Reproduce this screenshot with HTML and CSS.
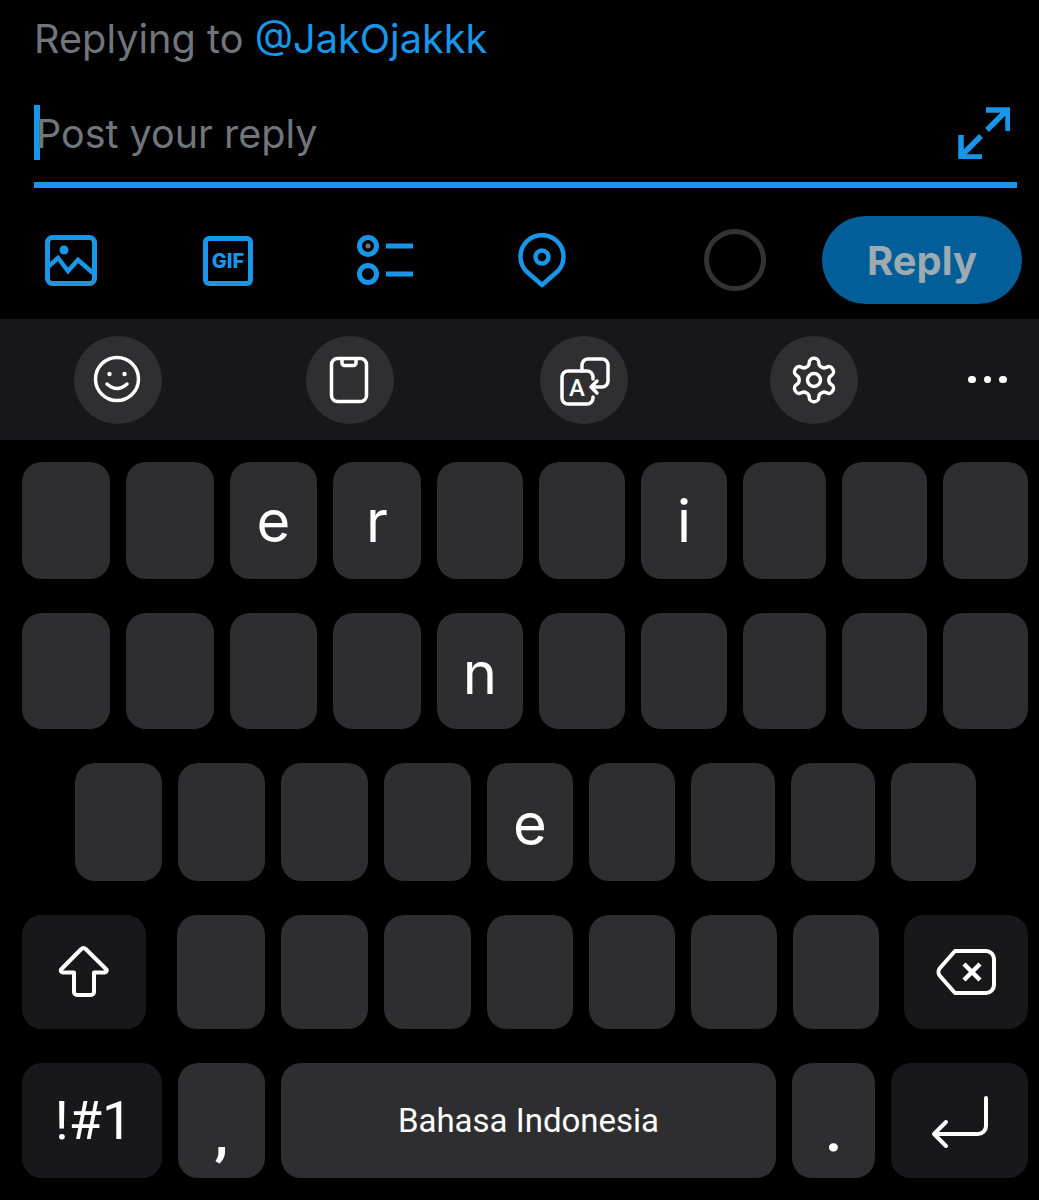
FILE: index.html
```html
<!DOCTYPE html>
<html>
<head>
    <title>Reply</title>
    <link rel="stylesheet" href="styles.css">
</head>
<body>
    <div class="compose">
        <div class="reply-to">Replying to <span class="handle">@JakOjakkk</span></div>
        <div class="input-row">
            <span class="caret"></span>
            <span class="placeholder">Post your reply</span>
            <svg class="expand" width="52" height="52" viewBox="0 0 52 52" fill="none" stroke="#1897ea" stroke-width="5.5">
                <path d="M28 3H50V24M49 3L29 23"/>
                <path d="M3 28V50H24M3 49L23 29"/>
            </svg>
        </div>
        <div class="input-line"></div>
        <div class="actions">
            <svg width="52" height="52" viewBox="0 0 52 52" fill="none" stroke="#1897ea" stroke-width="5">
                <rect x="2.5" y="2.5" width="47" height="46" rx="5"/>
                <circle cx="19" cy="15" r="4.5" fill="#1897ea" stroke="none"/>
                <path d="M4 31L13 23L23 36L33 25L48 38" stroke-width="4.5"/>
            </svg>
            <div class="gif-icon">GIF</div>
            <svg width="57" height="52" viewBox="0 0 57 52" fill="none" stroke="#1897ea" stroke-width="5">
                <circle cx="11" cy="11" r="8.5"/>
                <circle cx="11" cy="11" r="2.5" fill="#71767b" stroke="none"/>
                <circle cx="11" cy="39" r="8.5"/>
                <path d="M29 11H56M29 39H56"/>
            </svg>
            <svg width="48" height="56" viewBox="0 0 48 56" fill="none" stroke="#1897ea" stroke-width="4.5" stroke-linejoin="round">
                <path d="M24 52L8 38A21.5 21.5 0 1 1 40 38Z"/>
                <circle cx="24" cy="24" r="6.5"/>
            </svg>
            <div class="counter"></div>
            <div class="reply-btn">Reply</div>
        </div>
    </div>

    <div class="toolbar">
        <div class="tool">
            <svg width="50" height="50" viewBox="0 0 50 50" fill="none" stroke="#fff" stroke-width="3.5" stroke-linecap="round">
                <circle cx="24" cy="24" r="21.5"/>
                <circle cx="16.5" cy="19" r="2.2" fill="#fff" stroke="none"/>
                <circle cx="31.5" cy="19" r="2.2" fill="#fff" stroke="none"/>
                <path d="M14 29Q24 38 34 29"/>
            </svg>
        </div>
        <div class="tool">
            <svg width="50" height="50" viewBox="0 0 50 50" fill="none" stroke="#fff" stroke-width="3.5">
                <rect x="6.5" y="3.5" width="35" height="43" rx="6"/>
                <path d="M17 4V8a2.5 2.5 0 0 0 2.5 2.5H28.5A2.5 2.5 0 0 0 31 8V4"/>
            </svg>
        </div>
        <div class="tool">
            <svg width="56" height="60" viewBox="0 0 56 60" fill="none" stroke="#fff" stroke-width="3.5" stroke-linecap="round" stroke-linejoin="round">
                <path d="M37 29V27a6 6 0 0 0 -6 -6H12a6 6 0 0 0 -6 6V48a6 6 0 0 0 6 6H31a6 6 0 0 0 6 -6V47"/>
                <path d="M26 21V15a6 6 0 0 1 6 -6H46a6 6 0 0 1 6 6V31a6 6 0 0 1 -6 6H35M41 31L35 37L41 43"/>
                <text x="21" y="46" class="tool-letter" text-anchor="middle">A</text>
            </svg>
        </div>
        <div class="tool">
            <svg width="52" height="52" viewBox="0 0 24 24" fill="none" stroke="#fff" stroke-width="1.6" stroke-linecap="round" stroke-linejoin="round">
                <path d="M12.22 2h-.44a2 2 0 0 0-2 2v.18a2 2 0 0 1-1 1.73l-.43.25a2 2 0 0 1-2 0l-.15-.08a2 2 0 0 0-2.73.73l-.22.38a2 2 0 0 0 .73 2.73l.15.1a2 2 0 0 1 1 1.72v.51a2 2 0 0 1-1 1.74l-.15.09a2 2 0 0 0-.73 2.73l.22.38a2 2 0 0 0 2.73.73l.15-.08a2 2 0 0 1 2 0l.43.25a2 2 0 0 1 1 1.73V20a2 2 0 0 0 2 2h.44a2 2 0 0 0 2-2v-.18a2 2 0 0 1 1-1.73l.43-.25a2 2 0 0 1 2 0l.15.08a2 2 0 0 0 2.73-.73l.22-.39a2 2 0 0 0-.73-2.73l-.15-.08a2 2 0 0 1-1-1.74v-.5a2 2 0 0 1 1-1.74l.15-.09a2 2 0 0 0 .73-2.73l-.22-.38a2 2 0 0 0-2.73-.73l-.15.08a2 2 0 0 1-2 0l-.43-.25a2 2 0 0 1-1-1.73V4a2 2 0 0 0-2-2z"/>
                <circle cx="12" cy="12" r="3"/>
            </svg>
        </div>
        <div class="more"><span></span><span></span><span></span></div>
    </div>

    <div class="keyboard">
        <div class="row row-1">
            <div class="key"></div>
            <div class="key"></div>
            <div class="key">e</div>
            <div class="key">r</div>
            <div class="key"></div>
            <div class="key"></div>
            <div class="key">i</div>
            <div class="key"></div>
            <div class="key"></div>
            <div class="key"></div>
        </div>
        <div class="row row-2">
            <div class="key"></div>
            <div class="key"></div>
            <div class="key"></div>
            <div class="key"></div>
            <div class="key">n</div>
            <div class="key"></div>
            <div class="key"></div>
            <div class="key"></div>
            <div class="key"></div>
            <div class="key"></div>
        </div>
        <div class="row row-3">
            <div class="key"></div>
            <div class="key"></div>
            <div class="key"></div>
            <div class="key"></div>
            <div class="key">e</div>
            <div class="key"></div>
            <div class="key"></div>
            <div class="key"></div>
            <div class="key"></div>
        </div>
        <div class="row row-4">
            <div class="key key-fn key-shift">
                <svg width="52" height="54" viewBox="0 0 52 54" fill="none" stroke="#fff" stroke-width="4" stroke-linejoin="round">
                    <path d="M25.5 3a3 3 0 0 1 2.2 1L48 24a2 2 0 0 1 -1.5 3.5H36V47a3 3 0 0 1 -3 3H19a3 3 0 0 1 -3 -3V27.5H5a2 2 0 0 1 -1.5 -3.5L23.3 4a3 3 0 0 1 2.2 -1z"/>
                </svg>
            </div>
            <div class="key"></div>
            <div class="key"></div>
            <div class="key"></div>
            <div class="key"></div>
            <div class="key"></div>
            <div class="key"></div>
            <div class="key"></div>
            <div class="key key-fn key-back">
                <svg width="61" height="48" viewBox="0 0 61 48" fill="none" stroke="#fff" stroke-width="4" stroke-linejoin="round">
                    <path d="M19 3H50a8 8 0 0 1 8 8V37a8 8 0 0 1 -8 8H19L4 28a6 6 0 0 1 0 -8Z"/>
                    <path d="M28 16L44 32M44 16L28 32" stroke-width="4.5"/>
                </svg>
            </div>
        </div>
        <div class="row row-5">
            <div class="key key-fn key-symbols">!#1</div>
            <div class="key key-mark key-comma">,</div>
            <div class="key key-space">Bahasa Indonesia</div>
            <div class="key key-mark key-dot">.</div>
            <div class="key key-fn">
                <svg width="62" height="56" viewBox="0 0 62 56" fill="none" stroke="#fff" stroke-width="4" stroke-linecap="round" stroke-linejoin="round">
                    <path d="M57 5V33a8 8 0 0 1 -8 8H6M17 29L5 41L17 53"/>
                </svg>
            </div>
        </div>
    </div>
</body>
</html>
```

FILE: styles.css
```css
html, body {
    margin: 0;
    background-color: #000;
}
body {
    height: 1200px;
    overflow: hidden;
    font-family: Inter, "Liberation Sans", sans-serif;
}
svg {
    display: block;
}

/* compose area */
.compose {
    padding: 15px 22px 0 34px;
}
.reply-to {
    height: 48px;
    line-height: 48px;
    font-size: 39.7px;
    color: #71767b;
}
.handle {
    color: #1897ea;
}
.input-row {
    display: flex;
    align-items: center;
    height: 55px;
    margin-top: 42px;
}
.caret {
    width: 6px;
    height: 55px;
    background-color: #1897ea;
}
.placeholder {
    margin-left: -4px;
    padding-top: 2px;
    font-size: 39.5px;
    color: #71767b;
}
.expand {
    margin-left: auto;
    margin-right: 7px;
}
.input-line {
    height: 6px;
    margin-top: 22px;
    background-color: #1897ea;
}
.actions {
    display: grid;
    grid-template-columns: 158px 154px 161px 186px 118px 200px;
    align-items: center;
    height: 88px;
    margin-top: 28px;
    padding-left: 11px;
}
.actions svg, .gif-icon {
    margin-top: 2px;
}
.gif-icon {
    display: flex;
    align-items: center;
    justify-content: center;
    width: 50px;
    height: 50px;
    box-sizing: border-box;
    border: 5px solid #1897ea;
    border-radius: 6px;
    font-size: 20px;
    font-weight: 800;
    color: #1897ea;
}
.counter {
    width: 62px;
    height: 62px;
    box-sizing: border-box;
    border: 5px solid #333;
    border-radius: 50%;
}
.reply-btn {
    height: 88px;
    line-height: 90px;
    border-radius: 44px;
    background-color: #015e98;
    text-align: center;
    font-size: 40px;
    font-weight: 700;
    color: #9eaab2;
}

/* keyboard toolbar */
.toolbar {
    display: grid;
    grid-template-columns: 232px 234px 230px 198px auto;
    align-items: center;
    height: 121px;
    margin-top: 15px;
    padding-left: 74px;
    background-color: #17171a;
}
.tool {
    display: flex;
    align-items: center;
    justify-content: center;
    width: 88px;
    height: 88px;
    border-radius: 50%;
    background-color: #2f2f31;
}
.tool-letter {
    font-family: Roboto, sans-serif;
    font-size: 24px;
    font-weight: 500;
    fill: #fff;
    stroke: none;
}
.more {
    display: flex;
    gap: 8px;
}
.more span {
    width: 7.5px;
    height: 7.5px;
    border-radius: 50%;
    background-color: #fff;
}

/* keys */
.keyboard {
    display: flex;
    flex-direction: column;
    gap: 34px;
    padding: 22px 0 0 22px;
}
.row {
    display: grid;
    gap: 16px;
}
.row-1 {
    height: 117px;
    grid-template-columns: 88px 88px 87px 88px 86px 86px 86px 83px 85px 85px;
}
.row-2 {
    height: 116px;
    grid-template-columns: 88px 88px 87px 88px 86px 86px 86px 83px 85px 85px;
}
.row-3 {
    height: 118px;
    padding-left: 53px;
    grid-template-columns: 87px 87px 87px 87px 86px 86px 84px 84px 85px;
}
.row-4 {
    height: 114px;
    grid-template-columns: 139px 88px 87px 87px 86px 86px 86px 86px 133px;
}
.row-5 {
    height: 115px;
    grid-template-columns: 140px 87px 495px 83px 137px;
}
.key {
    display: flex;
    align-items: center;
    justify-content: center;
    box-sizing: border-box;
    border-radius: 20px;
    background-color: #2e2e30;
    font-family: Inter, Roboto, sans-serif;
    font-size: 58px;
    color: #fff;
}
.row-2 .key, .row-3 .key {
    padding-top: 4px;
}
.key-fn {
    background-color: #18181a;
}
.key-shift {
    margin-right: 15px;
}
.key-back {
    margin-left: 9px;
}
.key-symbols {
    padding-left: 3px;
    font-family: Roboto, sans-serif;
    font-size: 54px;
}
.key-space {
    font-family: Roboto, sans-serif;
    font-size: 33px;
}
.key-mark {
    align-items: flex-end;
    line-height: 1;
    font-family: Roboto, sans-serif;
    font-size: 56px;
    font-weight: 700;
}
.key-comma {
    padding-bottom: 15px;
}
.key-dot {
    padding-bottom: 18px;
}
```
